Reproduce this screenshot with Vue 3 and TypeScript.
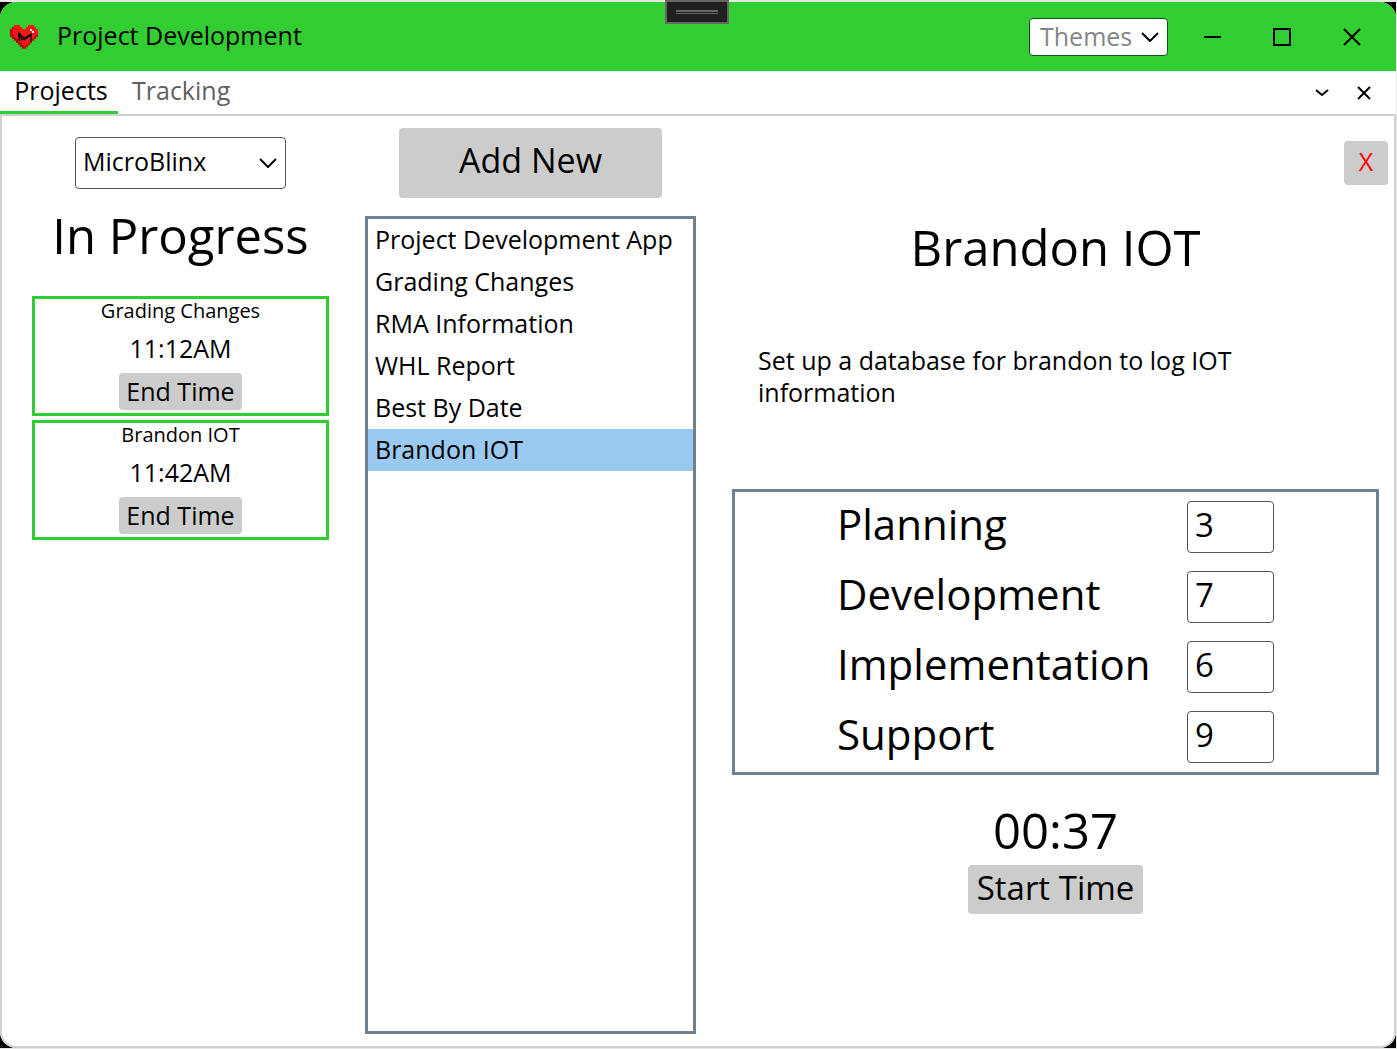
<script setup lang="ts">
import { ref } from 'vue'

interface Session {
  name: string
  start: string
}

interface Phase {
  id: string
  label: string
  value: string
}

const company = ref('MicroBlinx')
const theme = ref('Themes')
const selected = ref('Brandon IOT')

const projects: string[] = [
  'Project Development App',
  'Grading Changes',
  'RMA Information',
  'WHL Report',
  'Best By Date',
  'Brandon IOT',
]

const sessions: Session[] = [
  { name: 'Grading Changes', start: '11:12AM' },
  { name: 'Brandon IOT', start: '11:42AM' },
]

const phases = ref<Phase[]>([
  { id: 'planning', label: 'Planning', value: '3' },
  { id: 'development', label: 'Development', value: '7' },
  { id: 'implementation', label: 'Implementation', value: '6' },
  { id: 'support', label: 'Support', value: '9' },
])
</script>

<template>
  <div class="desktop">
    <div class="backdrop">
      <div class="window">
        <header class="titlebar">
          <svg class="logo" viewBox="0 0 28 24" width="28" height="24" shape-rendering="crispEdges" aria-hidden="true">
            <path fill="#b80000" d="M4 0h6v2h2v2h4v-2h2v-2h6v2h2v2h2v8h-2v2h-2v2h-2v2h-2v2h-2v2h-2v2h-4v-2h-2v-2h-2v-2h-2v-2h-2v-2h-2v-2h-2v-8h2v-2h2z" />
            <path fill="#ff1414" d="M4 0h6v2h2v2h4v-2h2v-2h6v2h2v2h2v6h-2v2h-2v2h-2v2h-2v2h-2v2h-2v2h-2v-2h-2v-2h-2v-2h-2v-2h-2v-2h-2v-2h-2v-6h2v-2z" />
            <path fill="#fff" d="M20 4h2v2h-2zM22 6h2v2h-2z" />
            <path fill="none" stroke="#101010" stroke-width="1.5" shape-rendering="auto" d="M9 16V8l5 5.500 7-4.500v7.500M9 8l3 7 3-2M14 15l7-5" />
          </svg>
          <h1 class="app-name">Project Development</h1>
          <div class="select-wrap themes">
            <select v-model="theme" aria-label="Themes">
              <option>Themes</option>
            </select>
            <svg class="chevron" viewBox="0 0 18 10" width="18" height="10" aria-hidden="true"><path d="M1 1l8 8 8-8" /></svg>
          </div>
          <button class="caption" aria-label="Minimize">
            <svg viewBox="0 0 18 18" width="18" height="18"><path d="M1 9h17" /></svg>
          </button>
          <button class="caption" aria-label="Maximize">
            <svg viewBox="0 0 18 18" width="18" height="18"><path d="M1 1h16v16h-16z" /></svg>
          </button>
          <button class="caption" aria-label="Close">
            <svg viewBox="0 0 18 18" width="18" height="18"><path d="M1 1l16 16M17 1l-16 16" /></svg>
          </button>
        </header>

        <nav class="tabs">
          <button class="tab active">Projects</button>
          <button class="tab">Tracking</button>
          <span class="spacer"></span>
          <button class="tab-tool" aria-label="Tab list">
            <svg viewBox="0 0 14 14" width="14" height="14"><path d="M1 4l6 5 6-5" /></svg>
          </button>
          <button class="tab-tool" aria-label="Close tab">
            <svg viewBox="0 0 14 14" width="14" height="14"><path d="M1 1l12 12M13 1l-12 12" /></svg>
          </button>
        </nav>

        <main class="panel">
          <section class="progress">
            <div class="select-wrap company">
              <select v-model="company" aria-label="Company">
                <option>MicroBlinx</option>
              </select>
              <svg class="chevron" viewBox="0 0 18 10" width="18" height="10" aria-hidden="true"><path d="M1 1l8 8 8-8" /></svg>
            </div>
            <h2 class="progress-title">In Progress</h2>
            <div class="cards">
              <article v-for="s in sessions" :key="s.name" class="card">
                <h3>{{ s.name }}</h3>
                <p>{{ s.start }}</p>
                <button class="btn end">End Time</button>
              </article>
            </div>
          </section>

          <section class="projects">
            <button class="btn add">Add New</button>
            <ul class="list">
              <li v-for="p in projects" :key="p">
                <button :class="{ selected: p === selected }" @click="selected = p">{{ p }}</button>
              </li>
            </ul>
          </section>

          <section class="details">
            <button class="btn remove" aria-label="Delete project">X</button>
            <h2 class="project-title">{{ selected }}</h2>
            <p class="description">Set up a database for brandon to log IOT information</p>
            <form class="phases" @submit.prevent>
              <div v-for="ph in phases" :key="ph.id" class="phase">
                <label :for="ph.id">{{ ph.label }}</label>
                <input :id="ph.id" v-model="ph.value" type="text" />
              </div>
            </form>
            <div class="timer">00:37</div>
            <button class="btn start">Start Time</button>
          </section>
        </main>
      </div>
    </div>
    <div class="grip"><span></span><span></span></div>
  </div>
</template>

<style>
body {
  margin: 0;
}
</style>

<style scoped>
.desktop {
  position: relative;
  display: flex;
  min-height: 100vh;
  box-sizing: border-box;
  padding: 2px 1px 1px 0;
  background: #e8e8e8;
  color: #000;
  font-family: 'Open Sans', 'Noto Sans', sans-serif;
  font-size: 25px;
}

.desktop * {
  box-sizing: border-box;
}

.backdrop {
  display: flex;
  flex: 1;
  min-width: 0;
  background: #000;
}

.window {
  display: flex;
  flex: 1;
  flex-direction: column;
  min-width: 0;
  overflow: hidden;
  border-radius: 16px;
  background: #fff;
}

h1,
h2,
h3,
p,
ul {
  margin: 0;
  padding: 0;
  font-weight: 400;
}

button,
select,
input {
  margin: 0;
  color: inherit;
  font: inherit;
}

button {
  padding: 0;
  border: 0;
  background: none;
}

/* Title bar */
.titlebar {
  display: flex;
  align-items: center;
  height: 69px;
  padding: 0 9px 0 10px;
  background: #32cd32;
}

.app-name {
  flex: 1;
  margin-left: 19px;
  padding-bottom: 3px;
  font-size: 25px;
  line-height: 34px;
}

.select-wrap {
  position: relative;
}

.select-wrap select {
  width: 100%;
  height: 100%;
  padding: 0 32px 4px 7px;
  border: 1px solid #555;
  border-radius: 4px;
  background: #fff;
  appearance: none;
}

.chevron {
  position: absolute;
  top: 50%;
  right: 9px;
  margin-top: -5px;
  fill: none;
  stroke: #000;
  stroke-width: 2;
  pointer-events: none;
}

.themes {
  width: 139px;
  height: 38px;
  margin-right: 9px;
}

.themes select {
  padding-left: 10px;
  border: 1px solid #145214;
  color: #858585;
}

.caption {
  display: flex;
  align-items: center;
  justify-content: center;
  width: 70px;
  height: 69px;
}

.caption svg,
.tab-tool svg {
  fill: none;
  stroke: #000;
  stroke-width: 2;
}

/* Tabs */
.tabs {
  display: flex;
  height: 43px;
  padding-right: 11px;
}

.tab {
  height: 43px;
  padding: 0 14px 2px;
  border-bottom: 3px solid transparent;
  color: #606060;
  line-height: 38px;
}

.tab.active {
  width: 118px;
  padding-right: 10px;
  border-bottom-color: #32cd32;
  color: #000;
}

.spacer {
  flex: 1;
}

.tab-tool {
  display: flex;
  align-items: center;
  justify-content: center;
  width: 42px;
}

/* Content */
.panel {
  display: grid;
  flex: 1;
  grid-template-columns: 357px 343px minmax(0, 1fr);
  border: 2px solid #d0d0d0;
  border-radius: 0 0 16px 16px;
}

.btn {
  border-radius: 4px;
  background: #ccc;
}

.progress {
  display: flex;
  flex-direction: column;
  align-items: center;
  padding: 21px 30px 12px;
}

.company {
  width: 211px;
  height: 52px;
}

.progress-title {
  margin-top: 16px;
  font-size: 49px;
  line-height: 60px;
}

.cards {
  display: flex;
  flex-direction: column;
  align-self: stretch;
  gap: 4px;
  margin-top: 31px;
}

.card {
  display: flex;
  flex-direction: column;
  align-items: center;
  padding-bottom: 3px;
  border: 3px solid #32cd32;
}

.card h3 {
  font-size: 20px;
  line-height: 24px;
}

.card p {
  margin-top: 8px;
  line-height: 34px;
}

.end {
  width: 123px;
  height: 37px;
  margin-top: 8px;
  padding-bottom: 2px;
}

.projects {
  display: flex;
  flex-direction: column;
  padding: 12px 6px;
}

.add {
  height: 70px;
  margin: 0 34px;
  padding-bottom: 6px;
  font-size: 34px;
}

.list {
  flex: 1;
  margin-top: 18px;
  border: 3px solid #708090;
  list-style: none;
}

.list button {
  display: block;
  width: 100%;
  height: 42px;
  padding: 0 7px 2px;
  line-height: 40px;
  text-align: left;
  white-space: nowrap;
}

.list .selected {
  background: #99c9ef;
}

.details {
  display: flex;
  flex-direction: column;
  align-items: center;
  padding: 25px 15px 12px 30px;
}

.remove {
  align-self: flex-end;
  width: 44px;
  height: 44px;
  margin-right: -9px;
  padding-bottom: 4px;
  color: #f00;
}

.project-title {
  margin-top: 32px;
  font-size: 49px;
  line-height: 60px;
}

.description {
  align-self: stretch;
  margin-top: 67px;
  padding: 0 26px;
  line-height: 32px;
}

.phases {
  align-self: stretch;
  margin-top: 81px;
  padding: 0 102px;
  border: 3px solid #708090;
}

.phase {
  display: flex;
  align-items: center;
  justify-content: space-between;
  height: 70px;
}

.phase label {
  padding-bottom: 6px;
  font-size: 42px;
  line-height: 58px;
}

.phase input {
  width: 87px;
  height: 52px;
  padding: 0 7px 5px;
  border: 1px solid #555;
  border-radius: 4px;
  font-size: 33px;
}

.timer {
  margin-top: 25px;
  font-size: 49px;
  line-height: 60px;
}

.start {
  width: 175px;
  height: 49px;
  margin-top: 5px;
  padding-bottom: 4px;
  font-size: 33px;
}

/* Docking handle that hangs over the top edge */
.grip {
  position: absolute;
  top: 0;
  left: 50%;
  display: flex;
  flex-direction: column;
  gap: 1px;
  width: 64px;
  height: 24px;
  margin-left: -34px;
  padding: 8px 9px;
  border: 2px solid #666;
  background: #202020;
}

.grip span {
  height: 2px;
  background: #666;
}
</style>
